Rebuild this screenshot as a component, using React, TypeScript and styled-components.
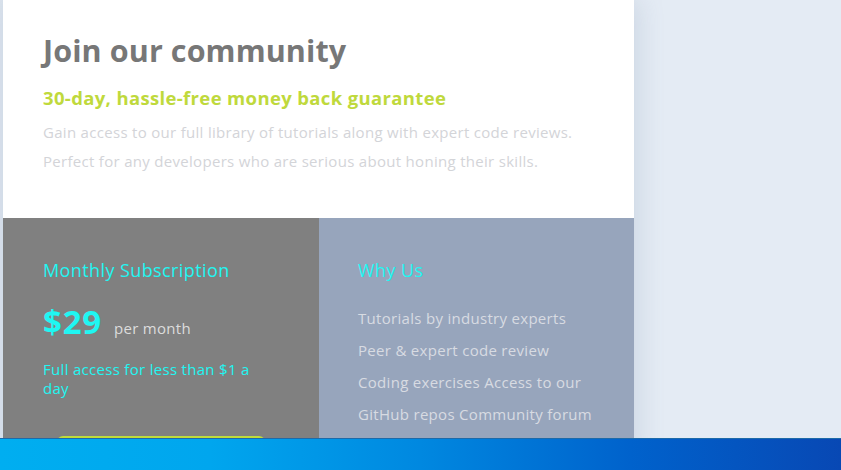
import React from "react";
import styled, { createGlobalStyle } from "styled-components";

const Global = createGlobalStyle`
  html, body { margin: 0; padding: 0; }
  body {
    background: #e4ebf4;
    font-family: "Open Sans", "Liberation Sans", sans-serif;
    overflow: hidden;
  }
  * { box-sizing: border-box; }
`;

const Screen = styled.div`
  width: 841px;
  height: 470px;
  display: flex;
  flex-direction: column;
  overflow: hidden;
`;

const Stage = styled.div`
  flex: 1;
  min-height: 0;
  display: flex;
  align-items: flex-start;
  padding-left: 3px;
  background: linear-gradient(90deg, #dce4ee 0, #dce4ee 3px, #e4ebf4 3px);
  overflow: hidden;
`;

const Card = styled.div`
  width: 631px;
  display: flex;
  flex-direction: column;
  box-shadow: 4px 0 24px rgba(120, 140, 170, 0.22);
`;

const Top = styled.section`
  background: #ffffff;
  padding: 30px 40px 42px;
`;

const Title = styled.h1`
  margin: 0 0 16px;
  font-size: 30.5px;
  font-weight: 700;
  letter-spacing: 0.1px;
  color: #777777;
  line-height: 40px;
`;

const Guarantee = styled.h2`
  margin: 0 0 8px;
  font-size: 18.5px;
  font-weight: 700;
  letter-spacing: 0.35px;
  color: #bfd93c;
  line-height: 24px;
`;

const Lead = styled.p`
  margin: 0;
  font-size: 15px;
  letter-spacing: 0.3px;
  line-height: 29px;
  color: #d3d4d8;
`;

const Bottom = styled.div`
  display: grid;
  grid-template-columns: 316px 315px;
  height: 240px;
`;

const Column = styled.section<{ $bg: string; $pl: number }>`
  background: ${(p) => p.$bg};
  padding: 40px 36px 0 ${(p) => p.$pl}px;
  display: flex;
  flex-direction: column;
`;

const ColTitle = styled.h3`
  margin: 0 0 20px;
  font-size: 18px;
  font-weight: 400;
  letter-spacing: 0.4px;
  color: #1ff6f2;
  line-height: 24px;
`;

const PriceRow = styled.div`
  display: flex;
  align-items: baseline;
  gap: 12px;
  margin-bottom: 18px;
`;

const Price = styled.span`
  font-size: 33px;
  font-weight: 700;
  letter-spacing: 0.8px;
  color: #1ff6f2;
  line-height: 40px;
`;

const Per = styled.span`
  font-size: 15px;
  letter-spacing: 0.3px;
  color: #dcdcdc;
`;

const Note = styled.p`
  margin: 0;
  font-size: 15px;
  letter-spacing: 0.3px;
  line-height: 19px;
  color: #1ff6f2;
  width: 226px;
`;

const SignUp = styled.button`
  margin: 38px 0 0 14px;
  width: 208px;
  height: 50px;
  flex-shrink: 0;
  border: 0;
  border-radius: 6px;
  background: #bfdc3a;
  color: #ffffff;
  font-family: inherit;
  font-size: 15px;
  font-weight: 700;
`;

const List = styled.ul`
  list-style: none;
  margin: 0;
  padding: 0;
  display: flex;
  flex-direction: column;
`;

const Item = styled.li`
  font-size: 15px;
  letter-spacing: 0.3px;
  line-height: 32px;
  color: #d7dbe2;
  white-space: nowrap;
`;

const Taskbar = styled.div`
  height: 32px;
  flex-shrink: 0;
  border-top: 1px solid #1e6aa8;
  background: linear-gradient(90deg, #00aef0 0%, #00a6ee 25%, #0088e0 50%, #0062cc 75%, #0848b4 100%);
`;

export default function App() {
  return (
    <Screen>
      <Global />
      <Stage>
        <Card>
          <Top>
            <Title>Join our community</Title>
            <Guarantee>30-day, hassle-free money back guarantee</Guarantee>
            <Lead>
              Gain access to our full library of tutorials along with expert code reviews.
              <br />
              Perfect for any developers who are serious about honing their skills.
            </Lead>
          </Top>
          <Bottom>
            <Column $bg="#808080" $pl={40}>
              <ColTitle>Monthly Subscription</ColTitle>
              <PriceRow>
                <Price>$29</Price>
                <Per>per month</Per>
              </PriceRow>
              <Note>Full access for less than $1 a day</Note>
              <SignUp>Sign Up</SignUp>
            </Column>
            <Column $bg="#97a5bc" $pl={39}>
              <ColTitle>Why Us</ColTitle>
              <List>
                <Item>Tutorials by industry experts</Item>
                <Item>Peer &amp; expert code review</Item>
                <Item>Coding exercises Access to our</Item>
                <Item>GitHub repos Community forum</Item>
              </List>
            </Column>
          </Bottom>
        </Card>
      </Stage>
      <Taskbar />
    </Screen>
  );
}
